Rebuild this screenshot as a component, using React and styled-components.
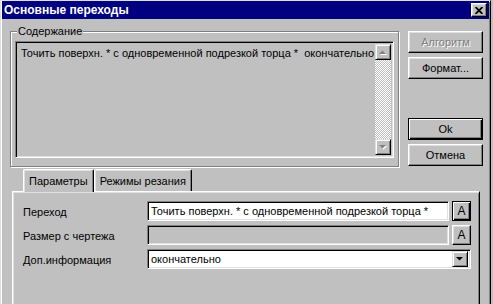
import React from 'react';
import styled, { createGlobalStyle } from 'styled-components';

const GlobalStyle = createGlobalStyle`
  html, body {
    margin: 0;
    padding: 0;
    background: #c0c0c0;
    overflow: hidden;
  }
  body {
    font-family: "Liberation Sans", Arial, sans-serif;
    font-size: 11px;
    color: #000;
  }
`;

const Window = styled.div`
  width: 491px;
  height: 330px;
  box-sizing: border-box;
  border: 1px solid;
  border-color: #dfdfdf #000 #000 #dfdfdf;
  box-shadow: inset 1px 1px #fff, inset -1px -1px #808080;
  padding: 0 1px 1px 1px;
  display: flex;
  flex-direction: column;
  background: #c0c0c0;
`;

const TitleBar = styled.div`
  height: 18px;
  background: #000080;
  display: flex;
  align-items: center;
  justify-content: space-between;
  padding: 0 2px 0 2px;
`;

const TitleText = styled.span`
  color: #fff;
  font-weight: bold;
  font-size: 12px;
`;

const CloseButton = styled.div`
  width: 16px;
  height: 14px;
  box-sizing: border-box;
  background: #c0c0c0;
  border: 1px solid;
  border-color: #fff #000 #000 #fff;
  box-shadow: inset -1px -1px #808080, inset 1px 1px #dfdfdf;
  display: flex;
  align-items: center;
  justify-content: center;
`;

const Body = styled.div`
  padding: 6px 0 0 8px;
  display: flex;
  flex-direction: column;
`;

const TopRow = styled.div`
  display: flex;
  align-items: flex-start;
`;

const Group = styled.fieldset`
  margin: 0;
  width: 389px;
  box-sizing: border-box;
  padding: 3px 4px 8px 4px;
  border: 1px solid #808080;
  box-shadow: inset 1px 1px #fff, 1px 1px 0 #fff;
`;

const Legend = styled.legend`
  padding: 0 1px;
  margin-left: 2px;
  line-height: 13px;
  background: #c0c0c0;
`;

const Memo = styled.div`
  height: 117px;
  box-sizing: border-box;
  border: 1px solid;
  border-color: #808080 #fff #fff #808080;
  box-shadow: inset 1px 1px #000, inset -1px -1px #dfdfdf;
  padding: 2px;
  display: flex;
  background: #c0c0c0;
`;

const MemoText = styled.div`
  flex: 1;
  white-space: pre;
  overflow: hidden;
  padding: 3px 0 0 3px;
  line-height: 13px;
`;

const ScrollBar = styled.div`
  width: 16px;
  display: flex;
  flex-direction: column;
  justify-content: space-between;
  background: repeating-conic-gradient(#fff 0 25%, #c0c0c0 0 50%) 0 0 / 2px 2px;
`;

const RaisedBox = styled.div`
  width: 16px;
  height: 16px;
  box-sizing: border-box;
  background: #c0c0c0;
  border: 1px solid;
  border-color: #dfdfdf #000 #000 #dfdfdf;
  box-shadow: inset 1px 1px #fff, inset -1px -1px #808080;
  display: flex;
  align-items: center;
  justify-content: center;
  flex-shrink: 0;
`;

const ButtonColumn = styled.div`
  margin: 6px 0 0 9px;
  width: 75px;
  display: flex;
  flex-direction: column;
  gap: 4px;
`;

const Button = styled.div`
  height: 22px;
  box-sizing: border-box;
  display: flex;
  align-items: center;
  justify-content: center;
  border: 1px solid;
  border-color: ${p => (p.$default ? '#000' : '#fff #000 #000 #fff')};
  box-shadow: ${p =>
    p.$default
      ? 'inset 1px 1px #fff, inset -1px -1px #000, inset -2px -2px #808080'
      : 'inset -1px -1px #808080, inset 1px 1px #dfdfdf'};
  color: ${p => (p.$disabled ? '#808080' : '#000')};
  text-shadow: ${p => (p.$disabled ? '1px 1px #fff' : 'none')};
  margin-top: ${p => p.$gapTop || 0}px;
`;

const TabStrip = styled.div`
  margin: 2px 0 0 2px;
  padding-left: 11px;
  display: flex;
  height: 22px;
  position: relative;
  z-index: 1;
`;

const Tab = styled.div`
  height: ${p => (p.$active ? 23 : 22)}px;
  box-sizing: border-box;
  padding: 0 5px;
  display: flex;
  align-items: center;
  background: #c0c0c0;
  border-top: 1px solid #fff;
  border-left: 1px solid #fff;
  border-right: 1px solid #000;
  border-radius: 2px 2px 0 0;
  box-shadow: inset -1px 0 #808080, inset 1px 1px #dfdfdf;
  padding-bottom: ${p => (p.$active ? 1 : 0)}px;
`;

const Panel = styled.div`
  margin-left: 2px;
  width: 468px;
  height: 130px;
  box-sizing: border-box;
  border: 1px solid;
  border-color: #fff #000 #000 #fff;
  box-shadow: inset 1px 1px #dfdfdf, inset -1px -1px #808080;
  padding: 9px 0 0 10px;
`;

const Fields = styled.div`
  display: grid;
  grid-template-columns: 121px 302px 19px;
  grid-auto-rows: 20px;
  column-gap: 3px;
  row-gap: 4px;
  align-items: center;
`;

const Label = styled.div`
  padding-top: 1px;
`;

const Field = styled.div`
  height: 20px;
  box-sizing: border-box;
  border: 1px solid;
  border-color: #808080 #fff #fff #808080;
  box-shadow: inset 1px 1px #000, inset -1px -1px #dfdfdf;
  background: ${p => (p.$disabled ? '#c0c0c0' : '#fff')};
  padding: 0 2px 0 3px;
  display: flex;
  align-items: center;
  justify-content: space-between;
  white-space: pre;
  overflow: hidden;
  grid-column: ${p => (p.$wide ? '2 / 4' : 'auto')};
`;

const LetterButton = styled.div`
  height: 20px;
  box-sizing: border-box;
  display: flex;
  align-items: center;
  justify-content: center;
  font-size: 12px;
  border: 1px solid;
  border-color: ${p => (p.$focused ? '#000' : '#fff #000 #000 #fff')};
  box-shadow: ${p =>
    p.$focused
      ? 'inset 1px 1px #fff, inset -1px -1px #000, inset -2px -2px #808080'
      : 'inset -1px -1px #808080, inset 1px 1px #dfdfdf'};
`;

const Arrow = ({ up, disabled }) => (
  <svg width="8" height="5" viewBox="0 0 8 5">
    {disabled && (
      <path
        d={up ? 'M4.5 1.5 L8 5 L1 5 Z' : 'M1 1 L8 1 L4.5 4.5 Z'}
        fill="#fff"
      />
    )}
    <path
      d={up ? 'M3.5 0.5 L7 4 L0 4 Z' : 'M0 0 L7 0 L3.5 3.5 Z'}
      fill={disabled ? '#808080' : '#000'}
    />
  </svg>
);

const CloseIcon = () => (
  <svg width="8" height="7" viewBox="0 0 8 7">
    <path d="M0.5 0 L7.5 7 M7.5 0 L0.5 7" stroke="#000" strokeWidth="1.8" />
  </svg>
);

export default function App() {
  return (
    <>
      <GlobalStyle />
      <Window>
        <TitleBar>
          <TitleText>Основные переходы</TitleText>
          <CloseButton>
            <CloseIcon />
          </CloseButton>
        </TitleBar>
        <Body>
          <TopRow>
            <Group>
              <Legend>Содержание</Legend>
              <Memo>
                <MemoText>
                  {'Точить поверхн. * с одновременной подрезкой торца *  окончательно'}
                </MemoText>
                <ScrollBar>
                  <RaisedBox>
                    <Arrow up disabled />
                  </RaisedBox>
                  <RaisedBox>
                    <Arrow disabled />
                  </RaisedBox>
                </ScrollBar>
              </Memo>
            </Group>
            <ButtonColumn>
              <Button $disabled>Алгоритм</Button>
              <Button>Формат...</Button>
              <Button $default $gapTop={35}>Ok</Button>
              <Button>Отмена</Button>
            </ButtonColumn>
          </TopRow>

          <TabStrip>
            <Tab $active>Параметры</Tab>
            <Tab>Режимы резания</Tab>
          </TabStrip>
          <Panel>
            <Fields>
              <Label>Переход</Label>
              <Field>Точить поверхн. * с одновременной подрезкой торца *</Field>
              <LetterButton $focused>A</LetterButton>

              <Label>Размер с чертежа</Label>
              <Field $disabled />
              <LetterButton>A</LetterButton>

              <Label>Доп.информация</Label>
              <Field $wide>
                <span>окончательно</span>
                <RaisedBox>
                  <Arrow />
                </RaisedBox>
              </Field>
            </Fields>
          </Panel>
        </Body>
      </Window>
    </>
  );
}
